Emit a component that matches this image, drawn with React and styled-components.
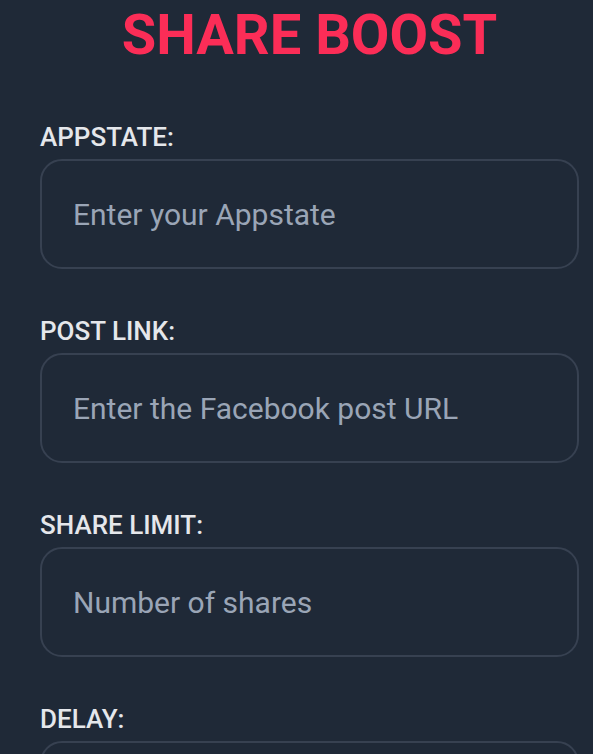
import React from "react";
import styled, { createGlobalStyle } from "styled-components";

const GlobalStyle = createGlobalStyle`
  html, body {
    margin: 0;
    padding: 0;
    background: #1f2937;
  }
  body {
    font-family: Roboto, "Noto Sans", "Liberation Sans", sans-serif;
  }
`;

const fields = [
  { label: "APPSTATE:", placeholder: "Enter your Appstate" },
  { label: "POST LINK:", placeholder: "Enter the Facebook post URL" },
  { label: "SHARE LIMIT:", placeholder: "Number of shares" },
  { label: "DELAY:", placeholder: "Delay in seconds" },
];

const App = () => {
  return (
    <>
      <GlobalStyle />
      <Page>
        <Title>SHARE BOOST</Title>
        <Form>
          {fields.map((f) => (
            <Field key={f.label}>
              <Label>{f.label}</Label>
              <Input placeholder={f.placeholder} />
            </Field>
          ))}
        </Form>
      </Page>
    </>
  );
};

export default App;

const Page = styled.div`
  width: 539px;
  padding-left: 40px;
  padding-top: 6px;
  height: 748px;
  overflow: hidden;
`;

const Title = styled.h1`
  margin: 0;
  font-size: 56px;
  line-height: 58px;
  font-weight: 700;
  color: #fb2d57;
  text-align: center;
`;

const Form = styled.div`
  display: flex;
  flex-direction: column;
  gap: 46px;
  margin-top: 57px;
`;

const Field = styled.div`
  display: flex;
  flex-direction: column;
  gap: 6px;
`;

const Label = styled.label`
  font-size: 26px;
  line-height: 32px;
  font-weight: 500;
  color: #e5e7eb;
`;

const Input = styled.input`
  box-sizing: border-box;
  width: 100%;
  height: 110px;
  border: 2px solid #374151;
  border-radius: 22px;
  background: #1f2937;
  padding: 0 31px;
  font-family: inherit;
  font-size: 30px;
  color: #e5e7eb;
  outline: none;

  &::placeholder {
    color: #9aa5b6;
  }
`;
